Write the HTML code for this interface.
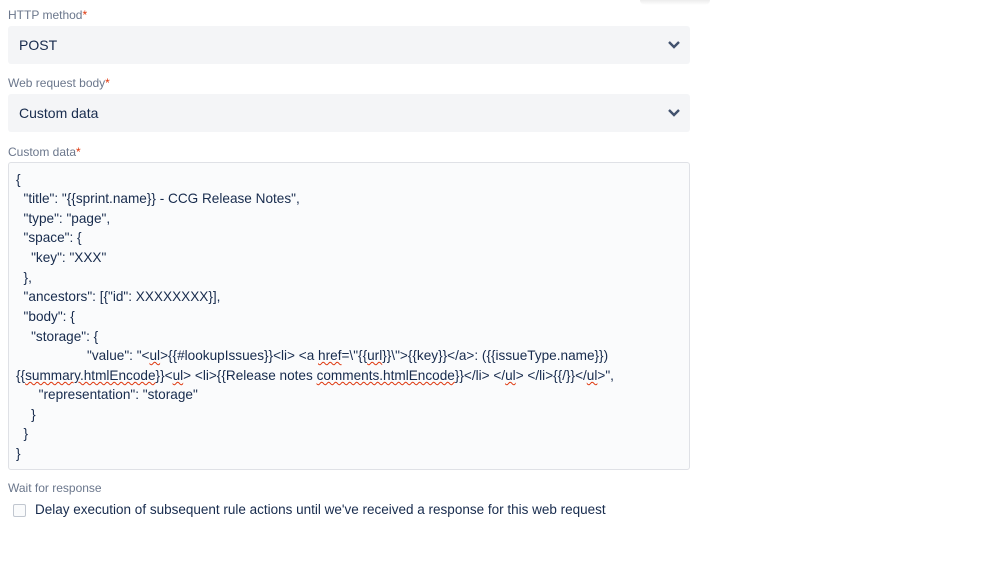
<!DOCTYPE html>
<html><head><style>
body{margin:0;background:#fff;font-family:"Liberation Sans",sans-serif;width:999px;height:562px;position:relative;overflow:hidden;color:#172b4d}
.lbl{position:absolute;left:8px;font-size:12px;color:#6b778c}
.lbl span{color:#de350b}
.sel{position:absolute;left:8px;width:682px;height:38px;background:#f4f5f7;border-radius:3px}
.sel .t{position:absolute;left:11px;top:11px;font-size:14px}
.sel svg{position:absolute;right:9px;top:14px}
.ta{position:absolute;left:8px;top:162px;width:680px;height:306px;border:1px solid #dfe1e6;background:#fafbfc;border-radius:3px}
.ln{position:absolute;font-size:13.6px;white-space:pre;left:7px}
.sq{text-decoration:underline wavy #de350b;text-decoration-thickness:1px}
.sh{position:absolute;left:640px;top:0;width:70px;height:5px;background:linear-gradient(#ececec,#fff);border-radius:0 0 8px 8px}
</style></head><body>
<div class="sh"></div>
<div class="lbl" style="top:8px">HTTP method<span>*</span></div>
<div class="sel" style="top:26px"><div class="t">POST</div><svg width="14" height="10" viewBox="0 0 14 10"><path d="M2 2l5 5 5-5" stroke="#42526e" stroke-width="2.4" fill="none"/></svg></div>
<div class="lbl" style="top:76px">Web request body<span>*</span></div>
<div class="sel" style="top:94px"><div class="t">Custom data</div><svg width="14" height="10" viewBox="0 0 14 10"><path d="M2 2l5 5 5-5" stroke="#42526e" stroke-width="2.4" fill="none"/></svg></div>
<div class="lbl" style="top:145px">Custom data<span>*</span></div>
<div class="ta">
<div class="ln" style="top:9px">{</div>
<div class="ln" style="top:28px">  "title": "{{sprint.name}} - CCG Release Notes",</div>
<div class="ln" style="top:48px">  "type": "page",</div>
<div class="ln" style="top:67px">  "space": {</div>
<div class="ln" style="top:87px">    "key": "XXX"</div>
<div class="ln" style="top:107px">  },</div>
<div class="ln" style="top:126px">  "ancestors": [{"id": XXXXXXXX}],</div>
<div class="ln" style="top:146px">  "body": {</div>
<div class="ln" style="top:166px">    "storage": {</div>
<div class="ln" style="top:185px;left:78px">"value": "&lt;<span class="sq">ul</span>&gt;{{#lookupIssues}}&lt;li&gt; &lt;a <span class="sq">href</span>=\"{{<span class="sq">url</span>}}\"&gt;{{key}}&lt;/a&gt;: ({{issueType.name}})</div>
<div class="ln" style="top:205px">{{<span class="sq">summary.htmlEncode</span>}}&lt;<span class="sq">ul</span>&gt; &lt;li&gt;{{Release notes <span class="sq">comments.htmlEncode</span>}}&lt;/li&gt; &lt;/<span class="sq">ul</span>&gt; &lt;/li&gt;{{/}}&lt;/<span class="sq">ul</span>&gt;",</div>
<div class="ln" style="top:224px">      "representation": "storage"</div>
<div class="ln" style="top:244px">    }</div>
<div class="ln" style="top:263px">  }</div>
<div class="ln" style="top:283px">}</div>
</div>
<div class="lbl" style="top:481px">Wait for response</div>
<div style="position:absolute;left:13px;top:504px;width:11px;height:11px;border:1px solid #c1c7d0;border-radius:2px;background:#fafbfc"></div>
<div style="position:absolute;left:35px;top:502px;font-size:13.5px">Delay execution of subsequent rule actions until we've received a response for this web request</div>
</body></html>
